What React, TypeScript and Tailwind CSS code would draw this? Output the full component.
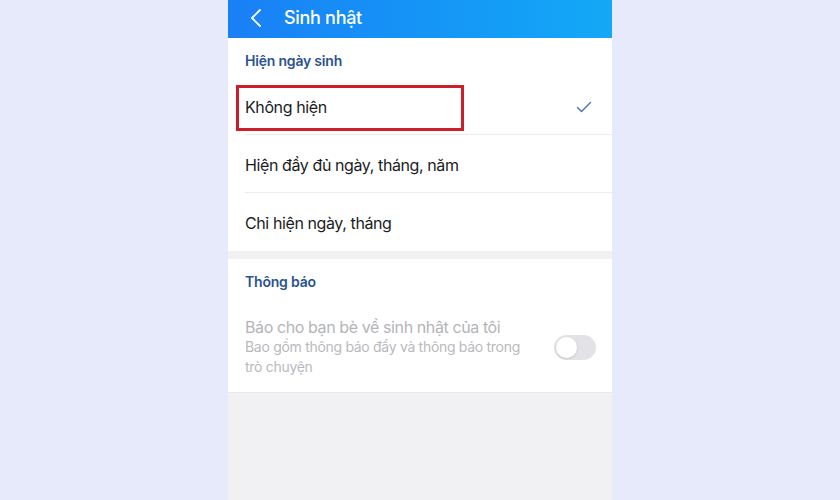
import React, { useState } from 'react';

const options = ['Không hiện', 'Hiện đầy đủ ngày, tháng, năm', 'Chỉ hiện ngày, tháng'];

export default function App() {
  const [selected, setSelected] = useState(0);
  const [notify, setNotify] = useState(false);

  return (
    <div
      className="w-[840px] h-[500px] bg-[#e6eafb] flex justify-center overflow-hidden"
      style={{ fontFamily: 'Inter, "Noto Sans", sans-serif' }}
    >
      <div className="w-[384px] h-full bg-[#f1f1f3] flex flex-col">
        {/* Top bar */}
        <div className="h-[38px] shrink-0 bg-gradient-to-r from-[#1a80f6] to-[#14a8f6] flex items-center pb-[3px]">
          <button className="w-[56px] h-full flex items-center justify-center text-white">
            <svg width="12" height="20" viewBox="0 0 12 20" fill="none">
              <path d="M10 2L2 10l8 8" stroke="currentColor" strokeWidth="1.8" strokeLinecap="round" strokeLinejoin="round" />
            </svg>
          </button>
          <span className="text-white text-[18px] font-medium tracking-[-0.3px]">Sinh nhật</span>
        </div>

        {/* Birthday visibility */}
        <div className="bg-white">
          <div className="h-[39px] flex items-center pt-[6px] pl-[17px] text-[14px] font-semibold text-[#2b5291] tracking-[-0.2px]">
            Hiện ngày sinh
          </div>
          {options.map((label, i) => (
            <div
              key={label}
              onClick={() => setSelected(i)}
              className="relative h-[58px] flex items-center pl-[17px] pr-[20px] pt-[2px] cursor-pointer"
            >
              <span className="flex-1 text-[16px] text-[#1c1c1e] tracking-[-0.4px]">{label}</span>
              {selected === i && (
                <svg width="16" height="12" viewBox="0 0 16 12" fill="none" className="text-[#4a6fb5]">
                  <path d="M1.5 6.5L5.5 10.5L14.5 1.5" stroke="currentColor" strokeWidth="1.4" strokeLinecap="round" strokeLinejoin="round" />
                </svg>
              )}
              {i < options.length - 1 && (
                <div className="absolute left-[17px] right-0 bottom-0 h-px bg-[#ececee]" />
              )}
              {i === 0 && (
                <div className="absolute left-[8px] top-[8px] w-[228px] h-[46px] border-[3px] border-[#cc1f2a]" />
              )}
            </div>
          ))}
        </div>

        <div className="h-[8px] shrink-0" />

        {/* Notifications */}
        <div className="bg-white border-b border-[#e9e9eb]">
          <div className="h-[44px] flex items-center pl-[17px] text-[14px] font-semibold text-[#2b5291] tracking-[-0.2px]">
            Thông báo
          </div>
          <div className="flex items-center pl-[17px] pr-[16px] pt-[14px] pb-[15px]">
            <div className="flex-1">
              <div className="text-[16px] leading-[20px] text-[#b4b4b8] tracking-[-0.4px]">Báo cho bạn bè về sinh nhật của tôi</div>
              <div className="w-[290px] text-[14px] leading-[20px] text-[#b9b9bd] tracking-[-0.3px]">
                Bao gồm thông báo đẩy và thông báo trong trò chuyện
              </div>
            </div>
            <button
              onClick={() => setNotify(!notify)}
              className="w-[42px] h-[25px] rounded-full bg-[#e3e3e7] p-[2px] flex items-center"
            >
              <span className="w-[21px] h-[21px] rounded-full bg-white shadow-sm" />
            </button>
          </div>
        </div>
      </div>
    </div>
  );
}
